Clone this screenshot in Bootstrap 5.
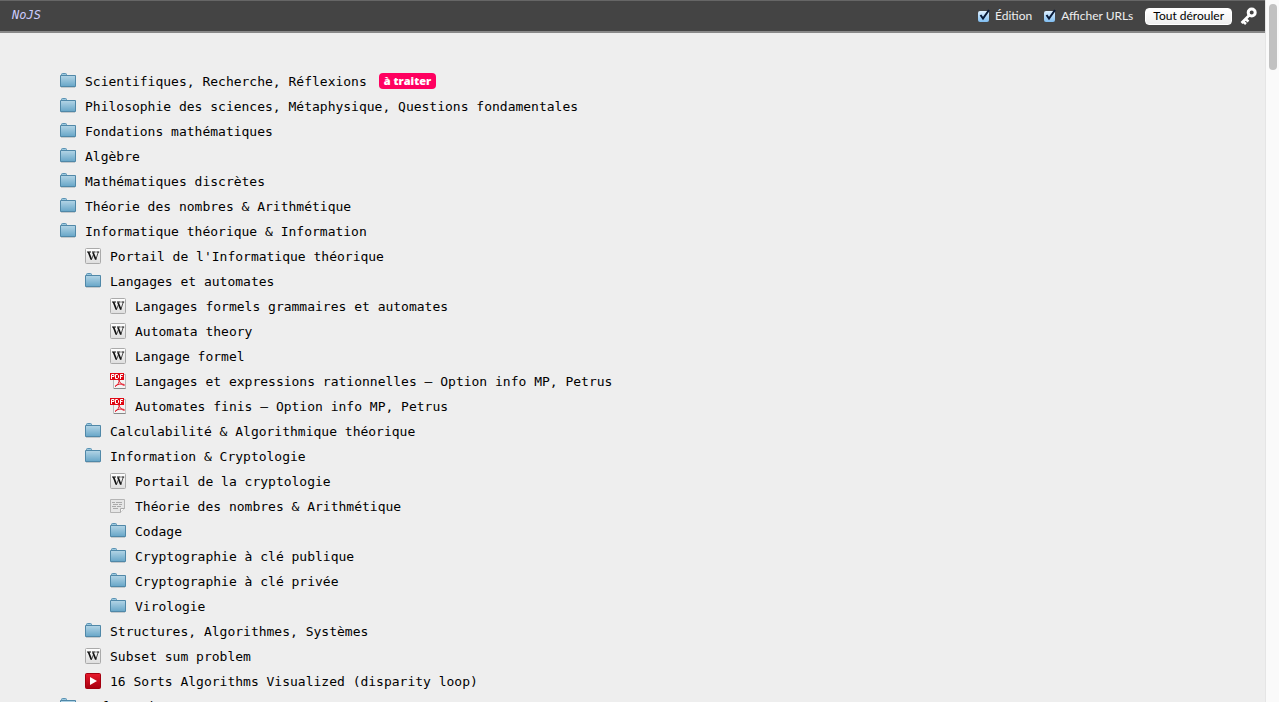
<!DOCTYPE html>
<html lang="fr">
<head>
<meta charset="utf-8">
<meta name="viewport" content="width=device-width, initial-scale=1">
<title>NoJS</title>
<link href="https://cdn.jsdelivr.net/npm/bootstrap@5.3.0/dist/css/bootstrap.min.css" rel="stylesheet">
<style>
  body { background: #eee; color: #000; font: 13px/25px "DejaVu Sans Mono", "Liberation Mono", monospace; }
  .tree-scroll { scrollbar-width: none; }
  .topbar { background: #444; border-top: 1px solid #666; border-bottom: 2px solid #888; height: 33px; padding: 0 8px 0 12px; }
  .brand-link { color: #ccf; font: italic 12px/28px "DejaVu Sans Mono", monospace; text-decoration: none; }
  .tools { font: 12px/16px Lato, sans-serif; color: #eee; }
  .tools .form-check-input { width: 11px; height: 11px; margin: 0; border: 0; border-radius: 2px; background: linear-gradient(#dff0ff, #7fbdf0); appearance: none; }
  .tick { position: relative; width: 13px; height: 14px; display: inline-flex; align-items: center; }
  .tick svg { position: absolute; left: 0; top: 0; pointer-events: none; }
  .expand-btn { height: 17px; padding: 0 7px; border: 1px solid #fff; border-radius: 4px; background: linear-gradient(#fff, #eee); color: #000; font: 12px/14px Lato, sans-serif; }
  .key-btn { line-height: 0; }
  .tree { padding: 35px 0 0 60px; }
  .tree ul { padding-left: 25px; }
  .tree a { color: #000; text-decoration: none; white-space: nowrap; }
  .tree svg { width: 16px; height: 16px; flex: none; }
  .entry { height: 25px; gap: 9px; }
  .entry a { padding-top: 1px; }
  .tag { background: #ff0060; color: #fff; font: 800 11px/16px "Open Sans", sans-serif; border-radius: 4px; padding: 0 5px; margin-left: 3px; }
  .rail { width: 14px; background: #fafafa; border-left: 1px solid #e5e5e5; padding: 4px 2px 0 3px; }
  .thumb { width: 8px; height: 66px; border-radius: 4px; background: #c1c1c1; }
</style>
</head>
<body>
<svg width="0" height="0" class="position-absolute" aria-hidden="true">
  <defs>
    <linearGradient id="gf" x1="0" y1="0" x2="0" y2="1"><stop offset="0" stop-color="#b4d5e6"/><stop offset="1" stop-color="#67a6c8"/></linearGradient>
    <linearGradient id="gw" x1="0" y1="0" x2="0" y2="1"><stop offset="0" stop-color="#fff"/><stop offset="1" stop-color="#ddd"/></linearGradient>
    <linearGradient id="gy" x1="0" y1="0" x2="0" y2="1"><stop offset="0" stop-color="#e8192c"/><stop offset="1" stop-color="#a80010"/></linearGradient>
    <symbol id="folder" viewBox="0 0 16 16"><path d="M1.500 3V1.500Q1.500.5 2.500.5H5.500Q6.500.5 6.500 1.500V3" fill="#9cc8de" stroke="#5a93b3"/><path d="M.5 2.500H15.500V13.500H.5Z" fill="url(#gf)" stroke="#5088a8"/><path d="M1 14.500H15" stroke="#c4c9cc"/></symbol>
    <symbol id="wiki" viewBox="0 0 16 16"><rect x=".5" y=".5" width="15" height="15" rx="1" fill="url(#gw)" stroke="#aaa"/><path d="M2 4H6M7 4H10.500M11.500 4H14.200" stroke="#111"/><path d="M3.500 4 6.300 11.500M8 4.500 10.800 11.500" stroke="#111" stroke-width="1.700" fill="none"/><path d="M6.300 12 8.500 6.500M10.700 12 13.300 4" stroke="#222" stroke-width=".8" fill="none"/></symbol>
    <symbol id="pdf" viewBox="0 0 16 16"><path d="M3.500 1.500H15.500V15.500H3.500Z" fill="#f3f3f3" stroke="#bbb"/><path d="M4 15.500H15.500" stroke="#888"/><path d="M5 13.500C8 12 9.500 9 9 6.500C9.500 10 12 12 14.500 12.500M5 13.500C7 11 11 10.500 14.500 11.500" stroke="#e51b2b" stroke-width="1" fill="none"/><path d="M0 0H14V7H0Z" fill="#e00612"/><path d="M1.500 6V1.500H4V3.500H2M5.500 1.500V5.500H7.500L8.500 4.500V2.500L7.500 1.500ZM10.500 6V1.500H13M10.500 3.500H12.500" fill="none" stroke="#fff"/></symbol>
    <symbol id="note" viewBox="0 0 16 16"><path d="M.5 1.500H14.500V10.500L10.500 14.500H.5Z" fill="#e6e6e6" stroke="#b4b4b4"/><path d="M2 4.500H5M6 4.500H12M3 6.500H8M9 6.500H12M2 8.500H6M7 8.500H11M3 10.500H8" stroke="#aaa"/><path d="M10.500 14.500V10.500H14.500" fill="#fafafa" stroke="#aaa"/></symbol>
    <symbol id="video" viewBox="0 0 16 16"><rect x=".5" y=".5" width="15" height="15" rx="1" fill="url(#gy)" stroke="#a3000f"/><path d="M5 4 12 8 5 12Z" fill="#fff"/></symbol>
  </defs>
</svg>
<div class="d-flex vh-100 overflow-hidden">
  <div class="flex-grow-1 overflow-auto tree-scroll">
    <header class="topbar d-flex justify-content-between">
      <a class="brand-link" href="#">NoJS</a>
      <div class="tools d-flex align-items-center">
        <div class="d-flex align-items-center gap-1 me-2 pe-1"><span class="tick"><input class="form-check-input" type="checkbox" id="edit" checked><svg width="13" height="14" viewBox="0 0 13 14"><path d="M2.500 6 5 9.500 11 1" fill="none" stroke="#081a38" stroke-width="2"/></svg></span><label for="edit">Édition</label></div>
        <div class="d-flex align-items-center gap-1 me-2 pe-1"><span class="tick"><input class="form-check-input" type="checkbox" id="urls" checked><svg width="13" height="14" viewBox="0 0 13 14"><path d="M2.500 6 5 9.500 11 1" fill="none" stroke="#081a38" stroke-width="2"/></svg></span><label for="urls">Afficher URLs</label></div>
        <button class="expand-btn me-2" type="button">Tout dérouler</button>
        <button class="key-btn border-0 bg-transparent p-0" type="button" aria-label="Connexion"><svg width="17" height="18" viewBox="0 0 17 18"><circle cx="11.700" cy="5.500" r="3.500" fill="none" stroke="#fff" stroke-width="3"/><path d="M9.500 8 1.500 16M3 14.500 6 17M5.500 12 8.500 14.500" fill="none" stroke="#fff" stroke-width="2.600"/></svg></button>
      </div>
    </header>
    <main>
      <ul class="tree list-unstyled m-0">
        <li><div class="entry d-flex align-items-center"><svg><use href="#folder"/></svg><a href="#">Scientifiques, Recherche, Réflexions</a><span class="tag">à traiter</span></div></li>
        <li><div class="entry d-flex align-items-center"><svg><use href="#folder"/></svg><a href="#">Philosophie des sciences, Métaphysique, Questions fondamentales</a></div></li>
        <li><div class="entry d-flex align-items-center"><svg><use href="#folder"/></svg><a href="#">Fondations mathématiques</a></div></li>
        <li><div class="entry d-flex align-items-center"><svg><use href="#folder"/></svg><a href="#">Algèbre</a></div></li>
        <li><div class="entry d-flex align-items-center"><svg><use href="#folder"/></svg><a href="#">Mathématiques discrètes</a></div></li>
        <li><div class="entry d-flex align-items-center"><svg><use href="#folder"/></svg><a href="#">Théorie des nombres &amp; Arithmétique</a></div></li>
        <li><div class="entry d-flex align-items-center"><svg><use href="#folder"/></svg><a href="#">Informatique théorique &amp; Information</a></div>
          <ul class="list-unstyled">
            <li><div class="entry d-flex align-items-center"><svg><use href="#wiki"/></svg><a href="#">Portail de l'Informatique théorique</a></div></li>
            <li><div class="entry d-flex align-items-center"><svg><use href="#folder"/></svg><a href="#">Langages et automates</a></div>
              <ul class="list-unstyled">
                <li><div class="entry d-flex align-items-center"><svg><use href="#wiki"/></svg><a href="#">Langages formels grammaires et automates</a></div></li>
                <li><div class="entry d-flex align-items-center"><svg><use href="#wiki"/></svg><a href="#">Automata theory</a></div></li>
                <li><div class="entry d-flex align-items-center"><svg><use href="#wiki"/></svg><a href="#">Langage formel</a></div></li>
                <li><div class="entry d-flex align-items-center"><svg><use href="#pdf"/></svg><a href="#">Langages et expressions rationnelles – Option info MP, Petrus</a></div></li>
                <li><div class="entry d-flex align-items-center"><svg><use href="#pdf"/></svg><a href="#">Automates finis – Option info MP, Petrus</a></div></li>
              </ul>
            </li>
            <li><div class="entry d-flex align-items-center"><svg><use href="#folder"/></svg><a href="#">Calculabilité &amp; Algorithmique théorique</a></div></li>
            <li><div class="entry d-flex align-items-center"><svg><use href="#folder"/></svg><a href="#">Information &amp; Cryptologie</a></div>
              <ul class="list-unstyled">
                <li><div class="entry d-flex align-items-center"><svg><use href="#wiki"/></svg><a href="#">Portail de la cryptologie</a></div></li>
                <li><div class="entry d-flex align-items-center"><svg><use href="#note"/></svg><a href="#">Théorie des nombres &amp; Arithmétique</a></div></li>
                <li><div class="entry d-flex align-items-center"><svg><use href="#folder"/></svg><a href="#">Codage</a></div></li>
                <li><div class="entry d-flex align-items-center"><svg><use href="#folder"/></svg><a href="#">Cryptographie à clé publique</a></div></li>
                <li><div class="entry d-flex align-items-center"><svg><use href="#folder"/></svg><a href="#">Cryptographie à clé privée</a></div></li>
                <li><div class="entry d-flex align-items-center"><svg><use href="#folder"/></svg><a href="#">Virologie</a></div></li>
              </ul>
            </li>
            <li><div class="entry d-flex align-items-center"><svg><use href="#folder"/></svg><a href="#">Structures, Algorithmes, Systèmes</a></div></li>
            <li><div class="entry d-flex align-items-center"><svg><use href="#wiki"/></svg><a href="#">Subset sum problem</a></div></li>
            <li><div class="entry d-flex align-items-center"><svg><use href="#video"/></svg><a href="#">16 Sorts Algorithms Visualized (disparity loop)</a></div></li>
          </ul>
        </li>
        <li><div class="entry d-flex align-items-center"><svg><use href="#folder"/></svg><a href="#">Informatique</a></div></li>
      </ul>
    </main>
  </div>
  <div class="rail flex-shrink-0" aria-hidden="true"><div class="thumb"></div></div>
</div>
<script src="https://cdn.jsdelivr.net/npm/bootstrap@5.3.0/dist/js/bootstrap.bundle.min.js"></script>
</body>
</html>
